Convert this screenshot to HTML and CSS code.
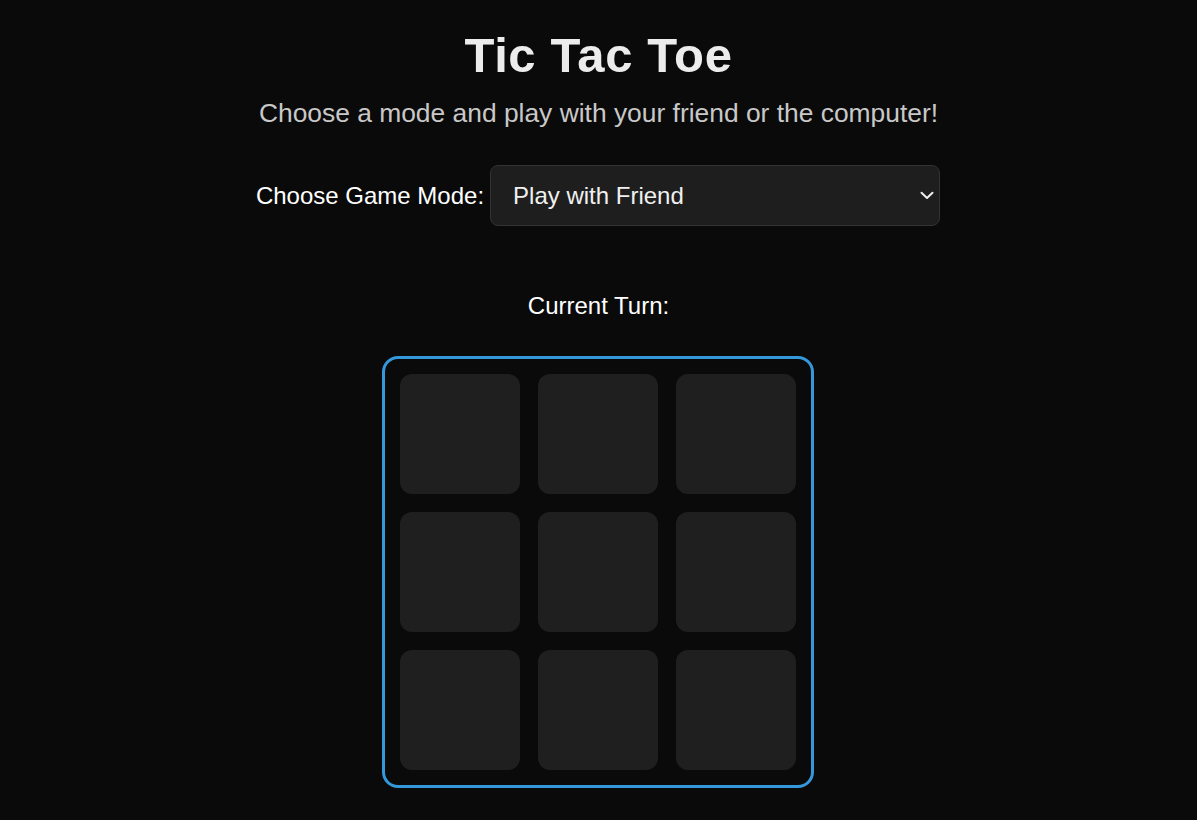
FILE: index.html
```html
<!DOCTYPE html>
<html lang="en">
<head>
<meta charset="utf-8">
<title>Tic Tac Toe</title>
<link rel="stylesheet" href="styles.css">
</head>
<body>
<main class="app">
  <h1 class="title">Tic Tac Toe</h1>
  <p class="subtitle">Choose a mode and play with your friend or the computer!</p>
  <div class="mode-row">
    <label class="mode-label" for="mode">Choose Game Mode:</label>
    <div class="select-wrap">
      <select id="mode" class="mode-select">
        <option>Play with Friend</option>
        <option>Play with Computer</option>
      </select>
      <svg class="chevron" width="14" height="9" viewBox="0 0 14 9"><path d="M1.5 1.8 L7 7 L12.5 1.8" fill="none" stroke="#eeeeee" stroke-width="2" stroke-linecap="round" stroke-linejoin="round"/></svg>
    </div>
  </div>
  <div class="turn">Current Turn: <span class="turn-value"></span></div>
  <div class="board">
    <div class="cell"></div><div class="cell"></div><div class="cell"></div>
    <div class="cell"></div><div class="cell"></div><div class="cell"></div>
    <div class="cell"></div><div class="cell"></div><div class="cell"></div>
  </div>
</main>
</body>
</html>
```
FILE: styles.css
```css
html, body {
  margin: 0;
  padding: 0;
  background: #0a0a0a;
  min-height: 100%;
}
body {
  font-family: "Liberation Sans", Arial, sans-serif;
  color: #ffffff;
}
.app {
  display: flex;
  flex-direction: column;
  align-items: center;
  padding-top: 26px;
}
.title {
  margin: 0;
  font-size: 49px;
  font-weight: 700;
  line-height: 58px;
  color: #ececec;
  letter-spacing: 0.6px;
}
.subtitle {
  margin: 14px 0 0;
  font-size: 26.4px;
  line-height: 30px;
  color: #c8c8c8;
}
.mode-row {
  display: flex;
  align-items: center;
  gap: 6px;
  margin-top: 37px;
  margin-right: 1px;
}
.mode-label {
  font-size: 24px;
  color: #ffffff;
}
.select-wrap {
  position: relative;
}
.mode-select {
  appearance: none;
  -webkit-appearance: none;
  width: 450px;
  height: 61px;
  padding: 0 40px 0 22px;
  background: #1e1e1e;
  border: 1px solid #333333;
  border-radius: 8px;
  color: #f0f0f0;
  font-family: "Liberation Sans", Arial, sans-serif;
  font-size: 24px;
  outline: none;
}
.chevron {
  position: absolute;
  right: 6px;
  top: 26px;
  pointer-events: none;
}
.turn {
  margin-top: 66px;
  font-size: 24px;
  line-height: 28px;
  color: #ffffff;
}
.board {
  display: grid;
  grid-template-columns: repeat(3, 120px);
  grid-template-rows: repeat(3, 120px);
  gap: 18px;
  padding: 15px;
  margin-top: 36px;
  margin-right: 1px;
  border: 3px solid #3498db;
  border-radius: 16px;
}
.cell {
  background: #1f1f1f;
  border-radius: 12px;
}
```
